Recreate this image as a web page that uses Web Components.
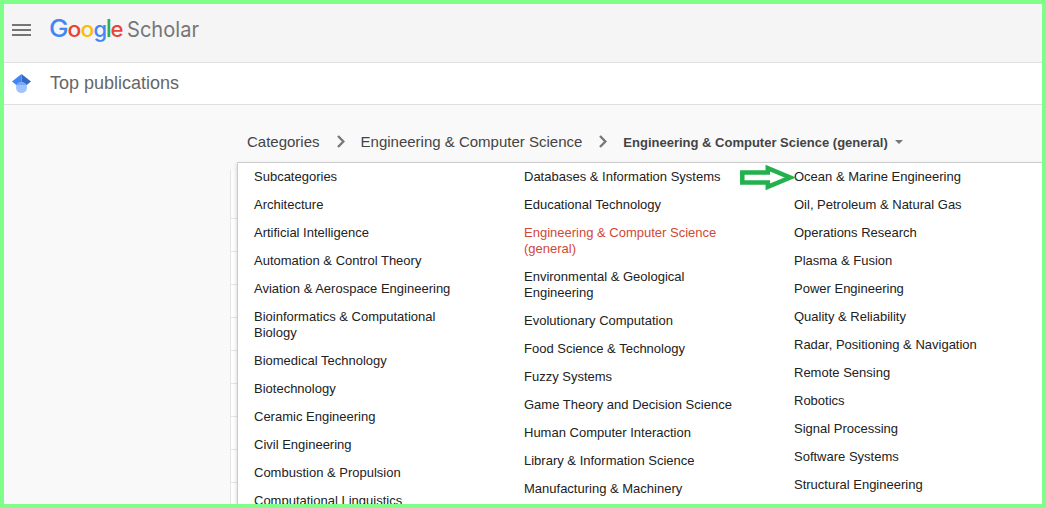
<!DOCTYPE html>
<html lang="en">
<head>
<meta charset="utf-8">
<title>Google Scholar Top publications</title>
<style>
  html, body {
    margin: 0;
    height: 100%;
    overflow: hidden;
  }
</style>
</head>
<body>
<scholar-page></scholar-page>

<script>
class ScholarHeader extends HTMLElement {
  constructor () {
    super()
    this.shadow = this.attachShadow({ mode: 'open' })
  }

  connectedCallback () {
    this.shadow.innerHTML = /* html */`
      <style>
        :host {
          display: flex;
          align-items: flex-start;
          box-sizing: border-box;
          height: 59px;
          padding-left: 8px;
          background: #f5f5f5;
          border-bottom: 1px solid #e0e0e0;
        }

        svg { display: block; }

        .menu { margin-top: 19px; }

        .logo {
          margin: 8px 0 0 17px;
          overflow: visible;
          font-family: Inter, sans-serif;
        }
      </style>

      <svg class="menu" width="19" height="14" viewBox="0 0 19 14" fill="#757575">
        <path d="M0 1h19v2H0zM0 6h19v2H0zM0 11h19v2H0z"/>
      </svg>
      <svg class="logo" width="180" height="40" viewBox="0 0 180 40">
        <g font-size="21.5" font-weight="500">
          <text x="1" y="25" font-size="24" fill="#4285f4" textLength="19.6" lengthAdjust="spacingAndGlyphs">G</text>
          <text x="19.6" y="25" fill="#ea4335" textLength="13.8" lengthAdjust="spacingAndGlyphs">o</text>
          <text x="32.6" y="25" fill="#fbbc05" textLength="13.8" lengthAdjust="spacingAndGlyphs">o</text>
          <text x="45.4" y="25" fill="#4285f4" textLength="13.6" lengthAdjust="spacingAndGlyphs">g</text>
          <text x="57.8" y="25" font-size="24" fill="#34a853">l</text>
          <text x="62.6" y="25" fill="#ea4335" textLength="13" lengthAdjust="spacingAndGlyphs">e</text>
        </g>
        <text x="79" y="25" font-size="21.5" fill="#777" textLength="72" lengthAdjust="spacingAndGlyphs">Scholar</text>
      </svg>
    `
  }
}

class PageTitle extends HTMLElement {
  constructor () {
    super()
    this.shadow = this.attachShadow({ mode: 'open' })
  }

  connectedCallback () {
    this.shadow.innerHTML = /* html */`
      <style>
        :host {
          display: flex;
          align-items: center;
          gap: 19px;
          box-sizing: border-box;
          height: 42px;
          padding-left: 8px;
          background: #fff;
          border-bottom: 1px solid #e0e0e0;
          color: #666;
          font-size: 18px;
        }
      </style>

      <svg width="19" height="19" viewBox="0 0 512 512">
        <path fill="#4285f4" d="M256 411 0 203 256 0z"/>
        <path fill="#356ac3" d="m256 411 256-208L256 0z"/>
        <circle fill="#a0c3ff" cx="256" cy="363" r="149"/>
        <path fill="#76a7fa" d="M121 299c24-51 75-86 135-86s111 35 135 86z"/>
      </svg>
      <slot></slot>
    `
  }
}

class BreadCrumbs extends HTMLElement {
  constructor () {
    super()
    this.shadow = this.attachShadow({ mode: 'open' })
  }

  connectedCallback () {
    const chevron = /* html */`
      <svg class="chevron" width="8" height="13" viewBox="0 0 8 13" fill="none" stroke="#777" stroke-width="2.4">
        <path d="M1 1l5.4 5.5L1 12"/>
      </svg>
    `
    this.shadow.innerHTML = /* html */`
      <style>
        :host {
          display: flex;
          align-items: center;
          height: 20px;
          padding: 27px 0 10px 243px;
          color: #444;
          font-size: 15px;
          white-space: nowrap;
        }

        .link { margin-bottom: 2px; }

        .chevron { margin: 0 16px 1px 17px; }

        .current {
          font-size: 13px;
          font-weight: bold;
        }

        .arrow {
          margin-left: 7px;
          border: 4px solid transparent;
          border-top-color: #777;
          border-bottom: 0;
        }
      </style>

      <span class="link">Categories</span>
      ${chevron}
      <span class="link">Engineering &amp; Computer Science</span>
      ${chevron}
      <span class="current">Engineering &amp; Computer Science (general)</span>
      <span class="arrow"></span>
    `
  }
}

class CategoryMenu extends HTMLElement {
  constructor () {
    super()
    this.shadow = this.attachShadow({ mode: 'open' })
    this.selected = 'Engineering & Computer Science (general)'
    this.marked = 'Ocean & Marine Engineering'
    this.columns = [
      [
        'Subcategories',
        'Architecture',
        'Artificial Intelligence',
        'Automation & Control Theory',
        'Aviation & Aerospace Engineering',
        'Bioinformatics & Computational Biology',
        'Biomedical Technology',
        'Biotechnology',
        'Ceramic Engineering',
        'Civil Engineering',
        'Combustion & Propulsion',
        'Computational Linguistics'
      ],
      [
        'Databases & Information Systems',
        'Educational Technology',
        'Engineering & Computer Science (general)',
        'Environmental & Geological Engineering',
        'Evolutionary Computation',
        'Food Science & Technology',
        'Fuzzy Systems',
        'Game Theory and Decision Science',
        'Human Computer Interaction',
        'Library & Information Science',
        'Manufacturing & Machinery'
      ],
      [
        'Ocean & Marine Engineering',
        'Oil, Petroleum & Natural Gas',
        'Operations Research',
        'Plasma & Fusion',
        'Power Engineering',
        'Quality & Reliability',
        'Radar, Positioning & Navigation',
        'Remote Sensing',
        'Robotics',
        'Signal Processing',
        'Software Systems',
        'Structural Engineering'
      ]
    ]
  }

  connectedCallback () {
    this.shadow.innerHTML = /* html */`
      <style>
        :host {
          display: grid;
          grid-template-columns: repeat(3, 270px);
          box-sizing: border-box;
          padding-left: 16px;
          background: #fff;
          border: 1px solid #ccc;
          border-right: 0;
          border-bottom: 0;
          box-shadow: 0 2px 4px rgba(0, 0, 0, .2);
          color: #222;
          font-size: 13px;
          line-height: 16px;
        }

        .item {
          position: relative;
          padding: 6px 54px 6px 0;
        }

        .selected { color: #d14836; }

        .pointer {
          position: absolute;
          left: -55px;
          top: 1px;
        }
      </style>
    `
    this.columns.forEach(items => {
      const column = document.createElement('div')
      items.forEach(name => {
        const item = document.createElement('div')
        item.className = name === this.selected ? 'item selected' : 'item'
        item.textContent = name
        if (name === this.marked) {
          item.insertAdjacentHTML('beforeend', /* html */`
            <svg class="pointer" width="58" height="27" viewBox="0 0 58 27">
              <path d="M3.3 8.4h25.5V4.1l22.4 9.4-22.4 9.4v-4.4H3.3z" fill="#fff" stroke="#22b14c" stroke-width="4.5"/>
            </svg>
          `)
        }
        column.append(item)
      })
      this.shadow.append(column)
    })
  }
}

class ScholarPage extends HTMLElement {
  constructor () {
    super()
    this.shadow = this.attachShadow({ mode: 'open' })
  }

  connectedCallback () {
    this.shadow.innerHTML = /* html */`
      <style>
        :host {
          display: flex;
          flex-direction: column;
          box-sizing: border-box;
          height: 100vh;
          overflow: hidden;
          border: 4px solid #7fff8a;
          background: #f9f9f9;
          font-family: "Liberation Sans", Arial, sans-serif;
        }

        .results {
          flex: 1;
          display: grid;
          grid-template-columns: 226px 7px 1fr;
          min-height: 0;
        }

        /* edge of the table that the open menu covers */
        .rows {
          grid-column: 2;
          margin-top: 8px;
          border-left: 1px solid #e5e5e5;
          background: repeating-linear-gradient(#fff 0 32px, #e5e5e5 32px 33px) 0 16px #fff;
        }

        .rows::before {
          content: "";
          display: block;
          height: 48px;
          background: #fcfcfc;
        }
      </style>

      <scholar-header></scholar-header>
      <page-title>Top publications</page-title>
      <bread-crumbs></bread-crumbs>
      <div class="results">
        <div class="rows"></div>
        <category-menu></category-menu>
      </div>
    `
  }
}

customElements.define('scholar-header', ScholarHeader)
customElements.define('page-title', PageTitle)
customElements.define('bread-crumbs', BreadCrumbs)
customElements.define('category-menu', CategoryMenu)
customElements.define('scholar-page', ScholarPage)
</script>
</body>
</html>
